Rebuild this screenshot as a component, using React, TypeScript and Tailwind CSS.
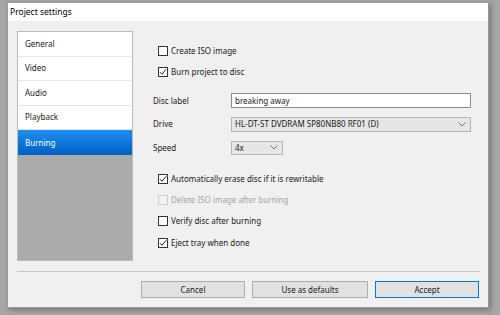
import React from "react";

const font = { fontFamily: '"Noto Sans", "Open Sans", sans-serif' };

function Box({ checked, disabled }: { checked?: boolean; disabled?: boolean }) {
  return (
    <div
      className={`w-[10px] h-[10px] border flex items-center justify-center ${
        disabled ? "border-[#cfcfcf] bg-[#f4f4f4]" : "border-[#333333] bg-white"
      }`}
    >
      {checked && (
        <svg width="8" height="8" viewBox="0 0 8 8">
          <path d="M1 4.2 L3 6.2 L7 1.3" fill="none" stroke="#222" strokeWidth="1" />
        </svg>
      )}
    </div>
  );
}

function Check({ label, checked, disabled, h = "h-[21px]" }: { label: string; checked?: boolean; disabled?: boolean; h?: string }) {
  return (
    <div className={`flex items-center gap-[3px] ${h}`}>
      <Box checked={checked} disabled={disabled} />
      <span className={disabled ? "text-[#a3a3a3]" : "text-[#1a1a1a]"}>{label}</span>
    </div>
  );
}

function Chevron() {
  return (
    <svg width="8" height="5" viewBox="0 0 8 5">
      <path d="M0.5 0.5 L4 4 L7.5 0.5" fill="none" stroke="#666" strokeWidth="0.9" />
    </svg>
  );
}

export default function App() {
  const items = ["General", "Video", "Audio", "Playback"];
  return (
    <div className="w-[500px] h-[315px] bg-[#a6a6a6] pl-[7px] pt-[2px] text-[8px]" style={font}>
      <div className="w-[482px] h-[306px] bg-[#f0f0f0] flex flex-col border border-[#9a9a9a] shadow-[2px_2px_5px_rgba(0,0,0,0.3)]">
        <div className="h-[18px] bg-white flex items-center pl-[2px] text-[8.5px] text-black">Project settings</div>
        <div className="flex pl-[9px] pt-[10px]">
          <div className="w-[116px] h-[230px] border border-[#bcbcbc] bg-[#ababab] flex flex-col">
            {items.map((t) => (
              <div key={t} className="h-[24.5px] bg-white border-b border-[#e6e6e6] flex items-center pl-[7px] text-[#1a1a1a]">
                {t}
              </div>
            ))}
            <div className="h-[25px] bg-gradient-to-b from-[#1f8ef0] to-[#0060c4] flex items-center pl-[7px] text-white">
              Burning
            </div>
          </div>
          <div className="flex flex-col pl-[20px] pt-[9px] w-[348px]">
            <div className="pl-[5px]">
              <Check label="Create ISO image" />
              <Check label="Burn project to disc" checked />
            </div>
            <div className="mt-[7px] flex flex-col">
              <div className="h-[23.5px] flex items-center">
                <span className="w-[78px] text-[#1a1a1a]">Disc label</span>
                <div className="w-[240px] h-[15px] bg-white border border-[#8c8c8c] flex items-center pl-[3px] text-[#1a1a1a]">
                  breaking away
                </div>
              </div>
              <div className="h-[23.5px] flex items-center">
                <span className="w-[78px] text-[#1a1a1a]">Drive</span>
                <div className="w-[240px] h-[15px] bg-[#e6e6e6] border border-[#b4b4b4] flex items-center justify-between pl-[3px] pr-[4px] text-[#1a1a1a]">
                  <span>HL-DT-ST DVDRAM SP80NB80 RF01 (D)</span>
                  <Chevron />
                </div>
              </div>
              <div className="h-[23.5px] flex items-center">
                <span className="w-[78px] text-[#1a1a1a]">Speed</span>
                <div className="w-[52px] h-[14px] bg-[#e6e6e6] border border-[#b4b4b4] flex items-center justify-between pl-[3px] pr-[4px] text-[#1a1a1a]">
                  <span>4x</span>
                  <Chevron />
                </div>
              </div>
            </div>
            <div className="pl-[5px] mt-[8.5px]">
              <Check label="Automatically erase disc if it is rewritable" checked h="h-[21.3px]" />
              <Check label="Delete ISO image after burning" disabled h="h-[21.3px]" />
              <Check label="Verify disc after burning" h="h-[21.3px]" />
              <Check label="Eject tray when done" checked h="h-[21.3px]" />
            </div>
          </div>
        </div>
        <div className="ml-[9px] mt-[10px] w-[463px] border-t border-[#c8c8c8]" />
        <div className="flex pl-[133px] pt-[9px] gap-[7px] text-[#1a1a1a]">
          <div className="w-[104px] h-[17px] bg-[#e1e1e1] border border-[#adadad] flex items-center justify-center">Cancel</div>
          <div className="w-[116px] h-[17px] bg-[#e1e1e1] border border-[#adadad] flex items-center justify-center">Use as defaults</div>
          <div className="w-[104px] h-[17px] bg-[#e1e1e1] border border-[#0078d7] flex items-center justify-center">Accept</div>
        </div>
      </div>
    </div>
  );
}
